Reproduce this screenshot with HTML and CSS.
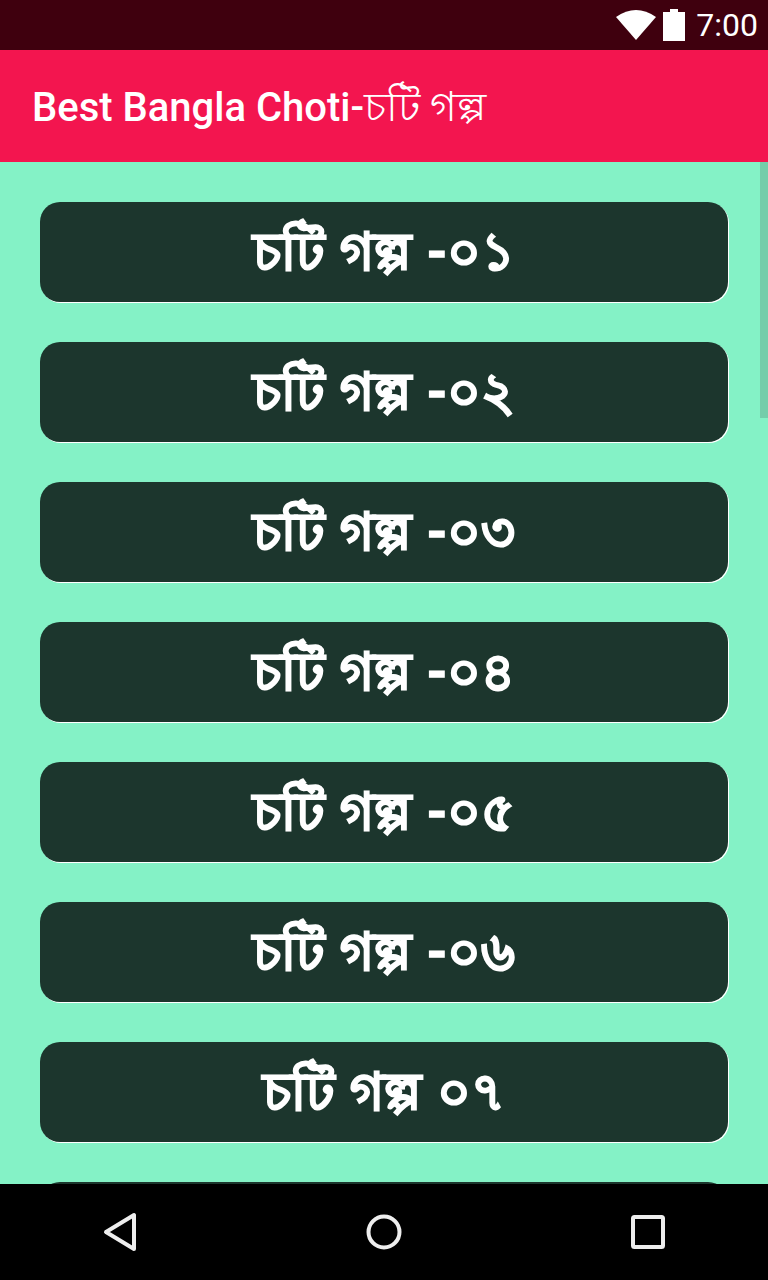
FILE: index.html
```html
<!DOCTYPE html>
<html lang="bn">
<head>
    <meta charset="UTF-8">
    <meta name="viewport" content="width=device-width, initial-scale=1.0">
    <title>Best Bangla Choti</title>
    <link rel="stylesheet" href="styles.css">
</head>
<body>
    <div class="phone">
        <div class="status-bar">
            <svg class="wifi" width="40" height="30" viewBox="0 0 40 30"><path d="M20 30 L0 7 Q20 -7 40 7 Z" fill="#fff"/></svg>
            <svg class="battery" width="22" height="32" viewBox="0 0 22 32"><path d="M7 0 H15 V3 H22 V32 H0 V3 H7 Z" fill="#fff"/></svg>
            <span class="clock">7:00</span>
        </div>
        <div class="toolbar"><span>Best Bangla Choti-<span class="toolbar-bn">চটি গল্প</span></span></div>
        <div class="content">
            <div class="scroll-thumb"></div>
            <div class="story-list">
                <button class="story-btn">চটি গল্প -০১</button>
                <button class="story-btn">চটি গল্প -০২</button>
                <button class="story-btn">চটি গল্প -০৩</button>
                <button class="story-btn">চটি গল্প -০৪</button>
                <button class="story-btn">চটি গল্প -০৫</button>
                <button class="story-btn">চটি গল্প -০৬</button>
                <button class="story-btn">চটি গল্প ০৭</button>
                <button class="story-btn"></button>
            </div>
        </div>
        <div class="nav-bar">
            <svg width="34" height="40" viewBox="0 0 34 40"><path d="M3 20 L31 3 V37 Z" fill="none" stroke="#eee" stroke-width="4" stroke-linejoin="round"/></svg>
            <svg width="36" height="36" viewBox="0 0 36 36"><circle cx="18" cy="18" r="15.5" fill="none" stroke="#eee" stroke-width="4"/></svg>
            <svg width="34" height="34" viewBox="0 0 34 34"><rect x="2" y="2" width="30" height="30" rx="1.5" fill="none" stroke="#eee" stroke-width="4"/></svg>
        </div>
    </div>
</body>
</html>
```

FILE: styles.css
```css
html, body {
    margin: 0;
    padding: 0;
    background: #000;
}
.phone {
    display: flex;
    flex-direction: column;
    width: 768px;
    height: 1280px;
    overflow: hidden;
    font-family: 'Roboto', 'Noto Sans', sans-serif;
}
.status-bar {
    display: flex;
    align-items: center;
    justify-content: flex-end;
    flex: 0 0 50px;
    padding-right: 10px;
    box-sizing: border-box;
    background: #3f000e;
    color: #fff;
}
.wifi {
    margin-right: 7px;
}
.battery {
    margin-right: 11px;
}
.clock {
    font-size: 32px;
    line-height: 50px;
}
.toolbar {
    display: flex;
    align-items: center;
    flex: 0 0 112px;
    padding-left: 32px;
    padding-top: 6px;
    box-sizing: border-box;
    background: #f3154f;
    color: #fff;
    font-size: 40px;
    font-weight: 500;
}
.toolbar-bn {
    font-size: 41px;
}
.content {
    position: relative;
    flex: 1;
    overflow: hidden;
    background: #84f2c6;
}
.scroll-thumb {
    position: absolute;
    top: 0;
    right: 0;
    width: 8px;
    height: 256px;
    background: #74cdaa;
}
.story-list {
    display: flex;
    flex-direction: column;
    gap: 40px;
    padding: 40px;
}
.story-btn {
    flex: 0 0 100px;
    height: 100px;
    padding: 6px 0 0;
    border: 0;
    border-radius: 20px;
    background: #1c362d;
    box-shadow: 1px 1px 0 #fff;
    color: #fff;
    font-family: 'Roboto', 'Noto Sans', sans-serif;
    font-size: 52px;
    font-weight: 700;
    word-spacing: 3px;
    -webkit-text-stroke: 1.5px #fff;
}
.nav-bar {
    display: grid;
    grid-template-columns: repeat(3, 264px);
    justify-content: center;
    justify-items: center;
    align-items: center;
    flex: 0 0 96px;
    background: #000;
}
```
